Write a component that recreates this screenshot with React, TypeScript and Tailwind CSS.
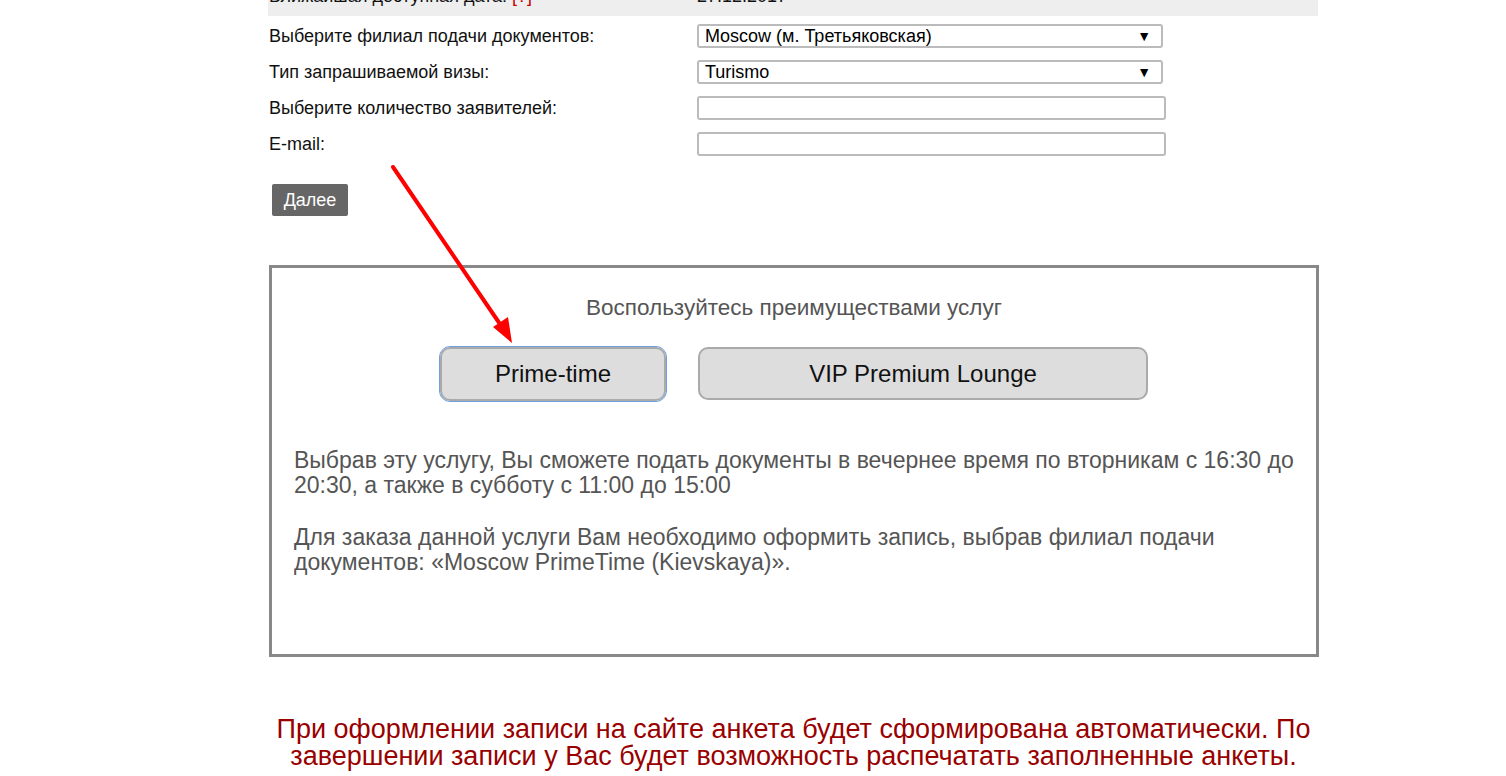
import React from 'react'

const FONT = { fontFamily: '"Liberation Sans", Arial, sans-serif' }

function Row({ label, children }: { label: React.ReactNode; children: React.ReactNode }) {
  return (
    <div className="flex items-center h-[36px]">
      <div className="w-[429px] text-[18px] text-[#111] pl-px">{label}</div>
      <div className="flex-1">{children}</div>
    </div>
  )
}

function FakeSelect({ value }: { value: string }) {
  return (
    <div className="w-[466px] h-[24px] border-2 border-[#bbb] rounded-[3px] bg-white flex items-center justify-between pl-[6px] pr-[10px] text-[18px] leading-[20px] text-black">
      <span>{value}</span>
      <span className="text-[14px]">▼</span>
    </div>
  )
}

function TextBox() {
  return <div className="w-[469px] h-[24px] border-2 border-[#bbb] rounded-[3px] bg-white" />
}

export default function App() {
  return (
    <div className="relative w-[1506px] h-[776px] overflow-hidden bg-white" style={FONT}>
      <div className="ml-[268px] w-[1051px] -mt-[17px]">
        {/* nearest date row, cut by the top edge */}
        <div className="flex items-center h-[33px] bg-[#eeeeee] w-[1050px]">
          <div className="w-[429px] text-[18px] text-[#111] pl-px -mt-[6px]">
            Ближайшая доступная дата: <span className="text-[#cc0000]">[?]</span>
          </div>
          <div className="text-[18px] text-[#111] -mt-[6px]">27.12.2017</div>
        </div>

        <div className="mt-[2px]">
          <Row label="Выберите филиал подачи документов:">
            <FakeSelect value="Moscow (м. Третьяковская)" />
          </Row>
          <Row label="Тип запрашиваемой визы:">
            <FakeSelect value="Turismo" />
          </Row>
          <Row label="Выберите количество заявителей:">
            <TextBox />
          </Row>
          <Row label="E-mail:">
            <TextBox />
          </Row>
        </div>

        <div className="pt-[22px] pl-[4px]">
          <button className="h-[32px] w-[76px] bg-[#666666] text-white text-[18px] rounded-[2px]">
            Далее
          </button>
        </div>

        {/* services box */}
        <div className="mt-[49px] ml-px w-[1050px] h-[392px] border-[3px] border-[#888888] px-[22px]">
          <div className="text-center text-[22.5px] text-[#555555] pt-[27px] leading-[26px]">
            Воспользуйтесь преимуществами услуг
          </div>
          <div className="flex justify-center gap-[32px] mt-[26px]">
            <button className="w-[226px] h-[54px] rounded-[10px] bg-[#dddddd] border-2 border-[#aaaaaa] text-[24px] text-[#111] outline outline-1 outline-[#6f9fe0]">
              Prime-time
            </button>
            <button className="w-[450px] h-[53px] rounded-[10px] bg-[#dddddd] border-2 border-[#aaaaaa] text-[24px] text-[#111]">
              VIP Premium Lounge
            </button>
          </div>
          <div className="mt-[47px] text-[23px] leading-[25px] text-[#555555]">
            <p>
              Выбрав эту услугу, Вы сможете подать документы в вечернее время по вторникам с 16:30 до 20:30, а также в субботу с 11:00 до 15:00
            </p>
            <p className="mt-[27px]">
              Для заказа данной услуги Вам необходимо оформить запись, выбрав филиал подачи документов: «Moscow PrimeTime (Kievskaya)».
            </p>
          </div>
        </div>

        <div className="mt-[59px] text-center text-[27px] leading-[27px] text-[#990000]">
          При оформлении записи на сайте анкета будет сформирована автоматически. По завершении записи у Вас будет возможность распечатать заполненные анкеты.
        </div>
      </div>

      {/* red annotation arrow */}
      <svg className="absolute left-0 top-0" width="1506" height="776" viewBox="0 0 1506 776">
        <line x1="393" y1="167" x2="502" y2="327" stroke="#ff0000" strokeWidth="4" strokeLinecap="round" />
        <polygon points="512,343 493,327 508,317" fill="#ff0000" />
      </svg>
    </div>
  )
}
